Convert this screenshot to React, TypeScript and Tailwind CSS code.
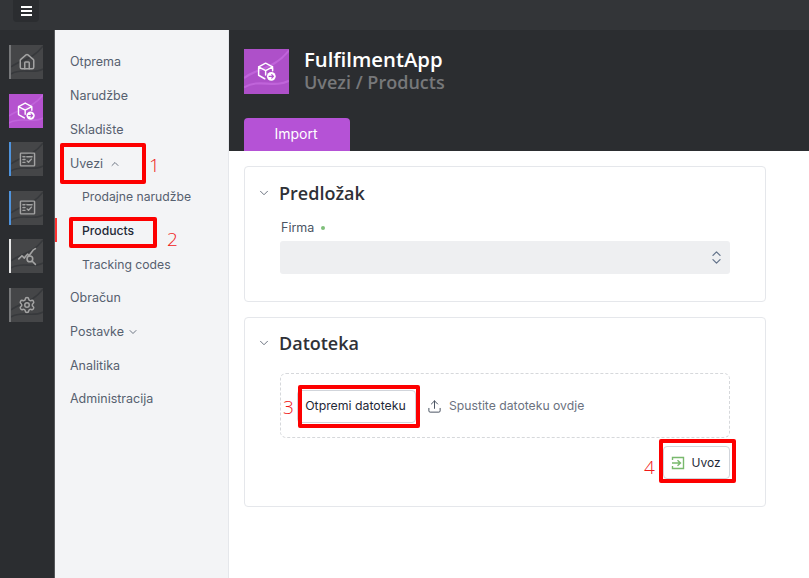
import { Home, Settings, ChevronDown, ChevronUp, ChevronsUpDown, Upload } from "lucide-react";
import React from "react";

const Swoosh = ({ light }: { light?: boolean }) => (
  <svg className="absolute inset-0 w-full h-full" viewBox="0 0 34 34" preserveAspectRatio="none" fill="none">
    <path d="M0 22C10 14 22 16 34 1" stroke={light ? "#c064da" : "#37393c"} strokeWidth="1.6" />
    <path d="M0 29C12 22 22 30 34 24" stroke={light ? "#c064da" : "#37393c"} strokeWidth="1.6" />
  </svg>
);

const CubeIcon = ({ size = 20 }: { size?: number }) => (
  <svg width={size} height={size} viewBox="0 0 24 24" fill="none" stroke="#fff" strokeWidth="1.7" strokeLinejoin="round" strokeLinecap="round">
    <path d="M11 2.5l8 4.2v4.5M11 2.5L3 6.7v9.6l7 4M3 6.7l8 4.3 8-4.3M11 11v5" />
    <circle cx="17.5" cy="17.5" r="5" fill="#fff" stroke="none" />
    <path d="M15 17.5h5M18 15.5l2 2-2 2" stroke="#b552cf" strokeWidth="1.4" />
  </svg>
);

const ReportIcon = () => (
  <svg width="17" height="17" viewBox="0 0 24 24" fill="none" stroke="#a3a3a3" strokeWidth="2" strokeLinejoin="round" strokeLinecap="round">
    <rect x="2" y="3" width="20" height="18" rx="1" />
    <path d="M5.5 8h3M5.5 12h3M5.5 16h3M11 8h7.5M11.5 14l2 2 4-4.5" />
  </svg>
);

const AnalyticsIcon = () => (
  <svg width="19" height="19" viewBox="0 0 24 24" fill="none" stroke="#a3a3a3" strokeWidth="2" strokeLinejoin="round" strokeLinecap="round">
    <path d="M1 15l4-4 3 3 4-5 2 2 5-7 3-2" />
    <circle cx="15" cy="15" r="3.6" />
    <path d="M18 18l4 4" />
  </svg>
);

const ImportIcon = () => (
  <svg width="14" height="14" viewBox="0 0 14 14" fill="none" stroke="#79b96d" strokeWidth="1.4">
    <path d="M1.5 4V1.5h11v11h-11V10" />
    <path d="M1 7h8M6.5 4.2L9.5 7l-3 2.8" />
  </svg>
);

const Tile = ({ bar, children, active }: { bar?: string; children: React.ReactNode; active?: boolean }) => (
  <div className={`relative w-[34px] h-[34px] flex items-center justify-center ${active ? "bg-[#b552cf]" : `bg-[#454648] border-l-2 ${bar ?? ""}`}`}>
    <Swoosh light={active} />
    <span className="relative flex">{children}</span>
  </div>
);

const NavItem = ({ children, sub, active }: { children: React.ReactNode; sub?: boolean; active?: boolean }) => (
  <div className={`h-[33.7px] flex items-center ${sub ? "pl-[27px] text-[12.2px]" : "pl-[15px] text-[12.5px]"} ${active ? "text-[#1f2937] font-medium" : "text-[#56606f]"}`}>
    {children}
  </div>
);

const Red = ({ className }: { className: string }) => (
  <div className={`absolute border-[4px] border-[#fd0000] rounded-[2px] ${className}`} />
);
const Num = ({ className, children }: { className: string; children: React.ReactNode }) => (
  <div className={`absolute text-[#f01818] text-[19px] leading-none font-light font-['Open_Sans',sans-serif] ${className}`}>{children}</div>
);

const heading = "font-['Open_Sans',sans-serif]";

export default function App() {
  return (
    <div className="relative w-[809px] h-[578px] overflow-hidden bg-white font-['Inter',sans-serif] flex flex-col">
      <header className="h-[30px] shrink-0 bg-[#333538] pl-[13px]">
        <div className="w-[26px] h-[22px] bg-[#2b2d30] rounded-b-[4px] flex flex-col items-center justify-center gap-[2px]">
          <span className="w-[11px] h-[2px] bg-white" />
          <span className="w-[11px] h-[2px] bg-white" />
          <span className="w-[11px] h-[2px] bg-white" />
        </div>
      </header>
      <div className="flex flex-1 min-h-0">
        <aside className="w-[55px] shrink-0 bg-[#2b2d30] border-r border-[#55575a] pl-[9px] pt-[15px] flex flex-col gap-[14.6px]">
          <Tile bar="border-[#77787a]"><Home size={18} color="#a3a3a3" strokeWidth={2} /></Tile>
          <Tile active><CubeIcon /></Tile>
          <Tile bar="border-[#4f93dc]"><ReportIcon /></Tile>
          <Tile bar="border-[#4f93dc]"><ReportIcon /></Tile>
          <Tile bar="border-[#e8e8e8]"><AnalyticsIcon /></Tile>
          <Tile bar="border-[#77787a]"><Settings size={18} color="#a3a3a3" strokeWidth={2} /></Tile>
        </aside>
        <nav className="w-[174px] shrink-0 bg-[#f3f4f6] border-r border-[#e5e7eb] pt-[16px]">
          <NavItem>Otprema</NavItem>
          <NavItem>Narudžbe</NavItem>
          <NavItem>Skladište</NavItem>
          <NavItem>Uvezi<ChevronUp size={12} className="ml-[6px]" strokeWidth={1.7} /></NavItem>
          <NavItem sub>Prodajne narudžbe</NavItem>
          <NavItem sub active>Products</NavItem>
          <NavItem sub>Tracking codes</NavItem>
          <NavItem>Obračun</NavItem>
          <NavItem>Postavke<ChevronDown size={12} className="ml-[3px]" strokeWidth={1.7} /></NavItem>
          <NavItem>Analitika</NavItem>
          <NavItem>Administracija</NavItem>
        </nav>
        <main className="flex-1 min-w-0 flex flex-col">
          <section className="h-[121px] shrink-0 bg-[#2b2d30] px-[15px] pt-[18px] flex flex-col justify-between">
            <div className="flex items-center gap-[15px]">
              <div className="relative w-[45px] h-[45px] bg-[#ae50c9] flex items-center justify-center">
                <Swoosh light />
                <span className="relative flex"><CubeIcon size={21} /></span>
              </div>
              <div className={`${heading} font-semibold leading-[23px]`}>
                <div className="text-white text-[20.3px]">FulfilmentApp</div>
                <div className="text-[#77787a] text-[18px]">Uvezi / Products</div>
              </div>
            </div>
            <div className="w-[106px] h-[33px] bg-[#b552d6] rounded-t-[4px] text-white text-[14px] flex items-center justify-center pr-[2px] pb-[2px]">Import</div>
          </section>
          <section className="flex-1 px-[15px] pr-[43px] pt-[15px] flex flex-col gap-[15px]">
            <div className="h-[136px] border border-[#e5e7eb] rounded-[4px] pl-[12px] pr-[35px] pt-[15px]">
              <div className="flex items-center gap-[8px]">
                <ChevronDown size={14} color="#6b7280" strokeWidth={1.7} />
                <h2 className={`${heading} font-semibold text-[18px] leading-[22px] text-[#2f3137]`}>Predložak</h2>
              </div>
              <div className="pl-[23px] mt-[16px]">
                <div className="pl-[1px] text-[12.5px] leading-[16px] text-[#4b5563] flex items-center">
                  Firma<span className="ml-[7px] w-[4px] h-[4px] rounded-full bg-[#7fbf7a]" />
                </div>
                <div className="mt-[5px] h-[33px] bg-[#eeeff1] rounded-[3px] flex items-center justify-end pr-[5px]">
                  <ChevronsUpDown size={17} color="#64748b" strokeWidth={1.8} />
                </div>
              </div>
            </div>
            <div className="h-[190px] border border-[#e5e7eb] rounded-[4px] pl-[12px] pr-[35px] pt-[14px]">
              <div className="flex items-center gap-[8px]">
                <ChevronDown size={14} color="#6b7280" strokeWidth={1.7} />
                <h2 className={`${heading} font-semibold text-[18px] leading-[22px] text-[#2f3137]`}>Datoteka</h2>
              </div>
              <div className="ml-[23px] mt-[19px] h-[65px] border border-dashed border-[#d6d8db] rounded-[6px] flex items-center pl-[16px] pt-[1px]">
                <div className="w-[119px] h-[33px] border border-[#d1d5db] rounded-[4px] bg-white flex items-center justify-center text-[12.3px] text-[#1f2937] pr-[2px]">Otpremi datoteku</div>
                <Upload size={15} color="#4b5563" strokeWidth={1.6} className="ml-[11px]" />
                <span className="ml-[7px] text-[12.2px] text-[#6b7280]">Spustite datoteku ovdje</span>
              </div>
              <div className="flex justify-end mt-[8px]">
                <div className="w-[67px] h-[33px] border border-[#d1d5db] rounded-[4px] bg-white flex items-center justify-center gap-[6px] text-[12px] text-[#1f2937] pr-[1px]">
                  <ImportIcon />Uvoz
                </div>
              </div>
            </div>
          </section>
        </main>
      </div>
      <div className="absolute left-[55px] top-[218px] w-[2px] h-[24px] bg-[#f33]" />
      <Red className="left-[60px] top-[143px] w-[86px] h-[41px]" />
      <Red className="left-[69px] top-[217px] w-[88px] h-[31px]" />
      <Red className="left-[298px] top-[385px] w-[122px] h-[43px]" />
      <Red className="left-[659px] top-[439px] w-[77px] h-[44px]" />
      <Num className="left-[149px] top-[156px]">1</Num>
      <Num className="left-[167px] top-[230px]">2</Num>
      <Num className="left-[283px] top-[398px]">3</Num>
      <Num className="left-[644px] top-[458px]">4</Num>
    </div>
  );
}
